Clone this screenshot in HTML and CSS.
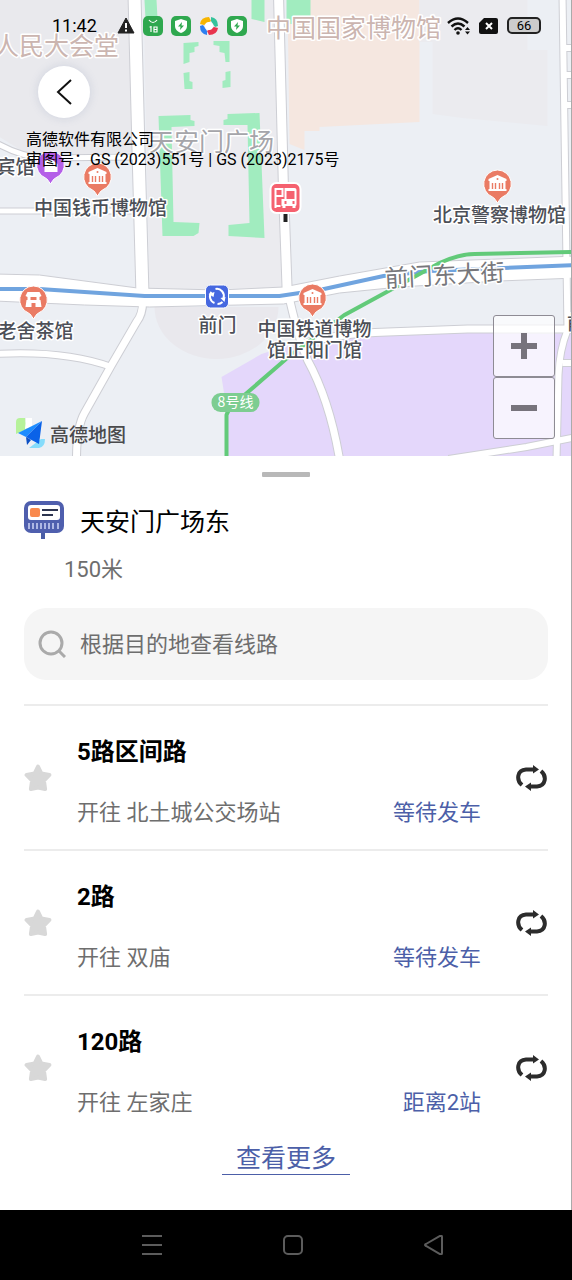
FILE: index.html
```html
<!DOCTYPE html>
<html lang="zh-CN">
<head>
  <meta charset="UTF-8" />
  <meta name="viewport" content="width=device-width, initial-scale=1" />
  <title>天安门广场东</title>
  <link rel="stylesheet" href="styles.css">
</head>
<body>
  <svg class="sprite" aria-hidden="true">
    <symbol id="pin" viewBox="0 0 30 36">
      <path d="M15 1a14 14 0 0 1 5 27c-2 1-3 3-5 6c-2-3-3-5-5-6a14 14 0 0 1 5-27z" stroke="#fff" stroke-width="1" />
    </symbol>
    <symbol id="museum" viewBox="0 0 30 36">
      <use href="#pin" fill="#ea7b64" />
      <path d="M15 6l9 4v2h-1v8h1v2H6v-2h1v-8H6v-2z" fill="#fff" />
      <path d="M10 14v6M13 14v6M17 14v6M20 14v6" stroke="#ea7b64" stroke-width="1.4" />
      <circle cx="15" cy="10" r="1" fill="#ea7b64" />
    </symbol>
    <symbol id="star" viewBox="0 0 28 28">
      <path d="M14 2.500l3.400 7 8 1.400-5.500 5.700 1.200 8.400-7.100-1.500-7.100 1.500 1.200-8.400-5.500-5.700 8-1.400z" fill="#d8d8d8" stroke="#d8d8d8" stroke-width="4" stroke-linejoin="round" />
    </symbol>
    <symbol id="swap" viewBox="0 0 32 26">
      <path d="M6 20C0 15 1 5 10 4.500h7M25 6C31 11 30 21 21 21.500h-7" fill="none" stroke="#2c2c2c" stroke-width="4" />
      <path d="M17 0l6 4.500-6 4zM15 26l-6-4.500 6-4z" fill="#2c2c2c" />
    </symbol>
    <symbol id="shield" viewBox="0 0 20 20">
      <rect width="20" height="20" rx="5" fill="#2fa84f" />
      <path d="M10 3l6 2v5c0 3.500-3 6-6 7-3-1-6-3.500-6-7V5z" fill="#fff" />
      <path d="M11 6l-4 4.500h2.500L9 14l4-4.500h-2.500z" fill="#2fa84f" />
    </symbol>
  </svg>

  <section class="map">
    <svg class="map-canvas" viewBox="0 0 572 456" preserveAspectRatio="xMidYMid slice">
      <rect width="572" height="456" fill="#eceff4" />
      <!-- zonas -->
      <path d="M0 0h129l5 152-68 3-40-2-26-16z" fill="#e9e9ed" />
      <path d="M144 0h130l8 288-132 1z" fill="#ebebef" />
      <path d="M288 0h132v122l-100 5v4h-15v19l-15-6z" fill="#f5e7e0" />
      <path d="M420 0h108v50h20v76l-85-8-30-4V42h-13z" fill="#ebebef" />
      <path d="M155 307a62 52 0 0 0 124 0z" fill="#e9e8ed" />
      <path d="M222 377l40-23 38-12 70-6 84-4 118 2v122H228V415z" fill="#e4d7fb" />
      <g fill="#a1ecbf">
        <path d="M145 0h12l1 18-12 1zM252 0h13v22l-13-3zM287 0h24v24h-24z" />
        <path d="M184 43l15-1v4l-4 1v5l-5 1v9l-6 2zM214 41h16v21h-4l-1-9-5-1v-6l-6-1zM184 73l6-1v9l3 1v7h-8zM231 71l-5 1v8l-3 1v7l8-1z" />
        <path d="M159 116l32-1v5l4 1v5l-23 1 2 95 26 1-1 10-5 3h-31zM228 114l32-1 5 125-36-2v-11l21-2-2-98h-24v-5l4-1z" />
      </g>
      <!-- calles: borde y relleno -->
      <g class="roads roads-edge">
        <path d="M135-5l4 155 4 145" stroke-width="14" />
        <path d="M279-5l5 195 4 110" stroke-width="11" />
        <path d="M143 300q1 13-6 22l-25 43-27 48q-8 14-8 46" stroke-width="9" />
        <path d="M-5 354q70-4 117 13" stroke-width="8" />
        <path d="M-5 142q26 15 50 16l92-1M-5 211h142" stroke-width="7" />
        <path d="M288 290q10 46 20 70 22 40 32 99" stroke-width="9" />
        <path d="M298 345q40-12 90-13l80-3h104" stroke-width="9" />
        <path d="M563-5l5 335q-8 20-9 45l-2 85M449 459l78-12 50-10M563 363h14M566 48h10M566 75h10M566 105h10" stroke-width="8" />
      </g>
      <path class="avenue" d="M-5 274l45 1 98 13 82 2 64-3 56-11 80-14 157-6v22l-77 3-100 6-60 6-56 11-134 3-65-2-90-4z" />
      <g class="roads roads-fill">
        <path d="M135-5l4 155 4 145" stroke-width="12" />
        <path d="M279-5l5 195 4 110" stroke-width="9" />
        <path d="M143 297q1 16-6 25l-25 43-27 48q-8 14-8 46" stroke-width="7" />
        <path d="M-5 354q70-4 117 13" stroke-width="6" />
        <path d="M-5 142q26 15 50 16l92-1M-5 211h142" stroke-width="5" />
        <path d="M288 290q10 46 20 70 22 40 32 99" stroke-width="7" />
        <path d="M298 345q40-12 90-13l80-3h104" stroke-width="7" />
        <path d="M563-5l5 335q-8 20-9 45l-2 85M449 459l78-12 50-10M563 363h14M566 48h10M566 75h10M566 105h10" stroke-width="6" />
      </g>
      <path class="metro" stroke="#70a4df" d="M-5 289h45l75 5 30 2h135l40-6 64-14 46-5 147-6" />
      <path class="metro" stroke="#62ca79" d="M227 459v-44q2-8 18-20l45-39 55-41 55-30 40-22q20-9 35-9l102-2" />
      <!-- parada -->
      <path d="M286 212v10" stroke="#222" stroke-width="4" />
      <rect x="271" y="183" width="30" height="30" rx="6" fill="#f5616f" stroke="#fff" stroke-width="2" />
      <path d="M276 188v20M276 189h7v7h-7M276 206h5" fill="none" stroke="#fff" stroke-width="2" />
      <path d="M285 188h10q2 0 2 2v14q0 2-1 2v2h-3v-2h-7v2h-3v-2h-1v-7h3zm2 3v8h8v-8zm-2 10v3h2v-3zm8 0v3h2v-3z" fill="#fff" fill-rule="evenodd" />
      <!-- metro -->
      <rect x="206" y="285" width="23" height="23" rx="5" fill="#4668e0" stroke="#fff" />
      <path d="M212 292a7 7 0 0 0 3 11M216 289a7 7 0 0 1 8 9M223 302a7 7 0 0 1-5 2" fill="none" stroke="#fff" stroke-width="2" />
      <path d="M209 294l6-2-1 5zM226 297l-5 1 4 4z" fill="#fff" />
      <rect x="212" y="393" width="48" height="19" rx="9" fill="#7dcd91" />
      <text class="line-name" x="236" y="407">8号线</text>

      <use href="#pin" x="36" y="150" width="30" height="36" fill="#b45fe8" />
      <path d="M45 160h8l5 4v8H45z" fill="#fff" />
      <use href="#museum" x="83" y="162" width="30" height="36" />
      <use href="#museum" x="483" y="169" width="30" height="36" />
      <use href="#museum" x="298" y="283" width="30" height="36" />
      <use href="#pin" x="19" y="285" width="30" height="36" fill="#ea7b64" />
      <path d="M28 292h12l2 4-2 1v3h1l1 7h-6v-4h-4v4h-6l1-7h1v-3l-2-1zm3 5v3h6v-3z" fill="#fff" fill-rule="evenodd" />

      <g class="area-name">
        <text x="57" y="55">人民大会堂</text>
        <text x="354" y="37">中国国家博物馆</text>
      </g>
      <text class="square-name" x="212" y="151">天安门广场</text>
      <text class="road-name" x="445" y="284" transform="rotate(-3 445 274)">前门东大街</text>
      <g class="poi-name">
        <text x="16" y="174">宾馆</text>
        <text x="101" y="215">中国钱币博物馆</text>
        <text x="500" y="222">北京警察博物馆</text>
        <text x="218" y="332">前门</text>
        <text x="36" y="338">老舍茶馆</text>
        <text x="315" y="336">中国铁道博物</text>
        <text x="315" y="357">馆正阳门馆</text>
        <text x="577" y="330">前</text>
      </g>
    </svg>

    <div class="map-top">
      <div class="status-bar">
        <span class="time">11:42</span>
        <div class="status-apps">
          <svg width="18" height="18" viewBox="0 0 18 18"><path d="M9 1l8 15H1z" fill="#222" stroke="#222" stroke-linejoin="round" /><path d="M9 6v5M9 12.500v2" stroke="#fff" stroke-width="2" /></svg>
          <svg width="20" height="20" viewBox="0 0 20 20"><rect width="20" height="20" rx="5" fill="#2fa84f" /><path d="M6 4q4 5 8 0M8 10v6M6.500 11H8M11 11h3v5h-3zM11 13.500h3" fill="none" stroke="#fff" stroke-width="1.200" /></svg>
          <svg width="20" height="20"><use href="#shield" /></svg>
          <svg width="20" height="20" viewBox="0 0 20 20">
            <path d="M1 8q1-7 9-7l2 4-7 4z" fill="#f7b500" />
            <path d="M12 1q7 1 7 9l-3 1-4-6z" fill="#35c39b" />
            <path d="M19 12q-1 7-9 7l-2-4 7-4z" fill="#e8344e" />
            <path d="M8 19q-7-1-7-9l3-1 4 6z" fill="#2d7ff0" />
            <circle cx="10" cy="10" r="4" fill="#fff" />
          </svg>
          <svg width="20" height="20"><use href="#shield" /></svg>
        </div>
        <div class="status-system">
          <svg width="24" height="18" viewBox="0 0 24 18"><path d="M1 6q10-9 20 0M4.500 9.500q6.500-6 13 0M7.500 13q3.500-3.500 7 0" fill="none" stroke="#111" stroke-width="2.400" /><circle cx="11" cy="16" r="1.800" fill="#111" /><path d="M18 13l2.500-3 2.500 3zM18 14.500l2.500 3 2.500-3z" fill="#111" /></svg>
          <svg width="20" height="16" viewBox="0 0 20 16"><path d="M5 0h12q2 0 2 2v12q0 2-2 2H2q-2 0-2-2V5z" fill="#111" /><path d="M7 5l6 6M13 5l-6 6" stroke="#fff" stroke-width="2" /></svg>
          <span class="battery">66</span>
        </div>
      </div>
      <button class="back" aria-label="返回">
        <svg width="18" height="28" viewBox="0 0 18 28"><path d="M16 2L3 14l13 12" fill="none" stroke="#111" stroke-width="2" /></svg>
      </button>
      <p class="copyright">高德软件有限公司<br>审图号：GS (2023)551号 | GS (2023)2175号</p>
    </div>

    <div class="zoom">
      <button aria-label="放大"><svg width="28" height="28" viewBox="0 0 28 28"><path d="M14 1v26M1 14h26" stroke="#77737c" stroke-width="6" /></svg></button>
      <button aria-label="缩小"><svg width="28" height="28" viewBox="0 0 28 28"><path d="M1 14h26" stroke="#77737c" stroke-width="6" /></svg></button>
    </div>

    <div class="map-logo">
      <svg width="30" height="32" viewBox="0 0 30 32">
        <path d="M0 5q0-4 4-4h5q0 8 6 9L0 17z" fill="#b6f29a" />
        <path d="M10 1h6v9l-7 2z" fill="#fff" />
        <path d="M13 31l12-9h4q0 8-6 9z" fill="#86dcfb" />
        <path d="M26 4L2 16l8 4z" fill="#1c8cff" />
        <path d="M26 4L10 20l13 7z" fill="#0a62e8" />
        <path d="M10 20l1 8 4-5z" fill="#0b4fc4" />
      </svg>
      <span>高德地图</span>
    </div>
  </section>

  <main class="sheet">
    <div class="handle"></div>
    <div class="station">
      <svg width="40" height="40" viewBox="0 0 40 40">
        <path d="M19 30v8" stroke="#4a5da6" stroke-width="4" />
        <rect width="40" height="32" rx="7" fill="#4f5fae" />
        <rect x="4" y="4" width="32" height="15" rx="3" fill="#fff" />
        <rect x="6" y="7" width="10" height="9" rx="2" fill="#f98a4e" />
        <path d="M18 9h16M18 14h11" stroke="#2d3550" stroke-width="2" />
        <path d="M5 22v6M9 22v6M13 22v6M17 22v6M21 22v6M25 22v6M29 22v6M34 22v6" stroke="#aeb7e4" stroke-width="2" />
      </svg>
      <h1>天安门广场东</h1>
    </div>
    <p class="distance">150米</p>

    <label class="search">
      <svg width="28" height="28" viewBox="0 0 28 28" fill="none" stroke="#aaa" stroke-width="3"><circle cx="13" cy="13" r="11" /><path d="M21 21l6 6" /></svg>
      <input type="text" placeholder="根据目的地查看线路" aria-label="根据目的地查看线路" />
    </label>

    <ul class="lines">
      <li>
        <button class="icon-btn" aria-label="收藏"><svg width="28" height="28"><use href="#star" /></svg></button>
        <div class="line-info">
          <h2>5路区间路</h2>
          <p><span>开往 北土城公交场站</span><span class="state">等待发车</span></p>
        </div>
        <button class="icon-btn" aria-label="换向"><svg width="32" height="26"><use href="#swap" /></svg></button>
      </li>
      <li>
        <button class="icon-btn" aria-label="收藏"><svg width="28" height="28"><use href="#star" /></svg></button>
        <div class="line-info">
          <h2>2路</h2>
          <p><span>开往 双庙</span><span class="state">等待发车</span></p>
        </div>
        <button class="icon-btn" aria-label="换向"><svg width="32" height="26"><use href="#swap" /></svg></button>
      </li>
      <li>
        <button class="icon-btn" aria-label="收藏"><svg width="28" height="28"><use href="#star" /></svg></button>
        <div class="line-info">
          <h2>120路</h2>
          <p><span>开往 左家庄</span><span class="state">距离2站</span></p>
        </div>
        <button class="icon-btn" aria-label="换向"><svg width="32" height="26"><use href="#swap" /></svg></button>
      </li>
    </ul>
    <a class="more" href="#">查看更多</a>
  </main>

  <nav class="system-nav">
    <button aria-label="最近任务"><svg width="20" height="20" viewBox="0 0 20 20"><path d="M0 1h20M0 10h20M0 19h20" /></svg></button>
    <button aria-label="主屏幕"><svg width="20" height="20" viewBox="0 0 20 20"><rect x="1" y="1" width="18" height="18" rx="4" /></svg></button>
    <button aria-label="返回"><svg width="20" height="20" viewBox="0 0 20 20"><path d="M2 9L16 1q2-1 2 1v16q0 2-2 1L2 11q-2-1 0-2z" /></svg></button>
  </nav>
</body>
</html>
```

FILE: styles.css
```css
* {
  box-sizing: border-box;
}
body {
  margin: 0;
  min-height: 100vh;
  display: flex;
  flex-direction: column;
  background: #fff;
  color: #000;
  font-family: Roboto, "Noto Sans CJK SC", sans-serif;
}
h1, h2, p, ul {
  margin: 0;
  padding: 0;
}
button {
  padding: 0;
  border: none;
  background: none;
  cursor: pointer;
}
svg {
  display: block;
  flex-shrink: 0;
}
.sprite {
  position: absolute;
  width: 0;
  height: 0;
}

/* mapa */
.map {
  position: relative;
  height: 456px;
  overflow: hidden;
  border-right: 1px solid #aaa;
}
.map-canvas {
  width: 100%;
  height: 100%;
}
.map-canvas text {
  font-family: "Noto Sans CJK SC", sans-serif;
  text-anchor: middle;
  paint-order: stroke;
  stroke: #fff;
  stroke-width: 3px;
  stroke-linejoin: round;
}
.roads {
  fill: none;
}
.roads-edge {
  stroke: #cdced4;
}
.roads-fill {
  stroke: #fff;
}
.avenue {
  fill: #fff;
  stroke: #cdced4;
}
.metro {
  fill: none;
  stroke-width: 4px;
}
.area-name {
  font-size: 25px;
  fill: #cbb5b0;
}
.square-name {
  font-size: 25px;
  fill: #a5a5aa;
}
.road-name {
  font-size: 24px;
  fill: #77777b;
}
.poi-name {
  font-size: 19px;
  font-weight: 500;
  fill: #4c4f57;
}
.map-canvas .line-name {
  font-size: 14px;
  fill: #fff;
  stroke: none;
}
.map-top {
  position: absolute;
  top: 0;
  left: 0;
  right: 0;
}
.status-bar {
  display: flex;
  align-items: center;
  height: 51px;
  padding: 0 30px 0 52px;
}
.time {
  font-size: 18px;
  margin-right: 20px;
}
.status-apps, .status-system {
  display: flex;
  align-items: center;
  gap: 8px;
}
.status-system {
  margin-left: auto;
}
.battery {
  width: 34px;
  height: 17px;
  border: 2px solid #222;
  border-radius: 5px;
  background: #ccc;
  font-size: 13px;
  line-height: 14px;
  text-align: center;
}
.back {
  display: flex;
  align-items: center;
  justify-content: center;
  width: 52px;
  height: 52px;
  margin: 15px 0 12px 38px;
  border-radius: 50%;
  background: #fff;
  box-shadow: 0 0 10px rgba(100, 120, 160, 0.2);
}
.copyright {
  padding-left: 26px;
  font-size: 16px;
  line-height: 20px;
}
.zoom {
  position: absolute;
  right: 16px;
  bottom: 17px;
  width: 62px;
}
.zoom button {
  display: flex;
  align-items: center;
  justify-content: center;
  width: 100%;
  height: 62px;
  border: 1px solid #8e8b94;
  border-radius: 3px;
  background: rgba(255, 255, 255, 0.7);
}
.map-logo {
  position: absolute;
  left: 16px;
  bottom: 7px;
  display: flex;
  align-items: center;
  gap: 4px;
  font-size: 19px;
  font-weight: 500;
  color: #4a4a4c;
}

/* panel inferior */
.sheet {
  flex: 1;
  padding: 16px 23px 24px 24px;
  border-right: 1px solid #aaa;
}
.handle {
  width: 48px;
  height: 5px;
  margin: 0 auto 24px;
  background: #b8b8b8;
  border-radius: 1px;
}
.station {
  display: flex;
  align-items: flex-start;
  gap: 16px;
}
.station h1 {
  font-size: 25px;
  font-weight: 400;
  line-height: 44px;
}
.distance {
  margin: 11px 0 24px 40px;
  font-size: 22px;
  line-height: 28px;
  color: #6e6e6e;
}
.search {
  display: flex;
  align-items: center;
  gap: 14px;
  height: 72px;
  padding: 0 14px;
  border-radius: 22px;
  background: #f5f5f5;
}
.search input {
  flex: 1;
  min-width: 0;
  padding: 0;
  border: none;
  outline: none;
  background: none;
  font-family: inherit;
  font-size: 22px;
}
.search input::placeholder {
  color: #6e6e6e;
}
.lines {
  margin-top: 24px;
  list-style: none;
}
.lines li {
  display: flex;
  align-items: center;
  border-top: 2px solid #ececec;
}
.line-info {
  flex: 1;
  margin: 0 35px 0 25px;
  padding: 30px 0 20px;
}
.line-info h2 {
  margin-bottom: 29px;
  font-size: 24px;
  font-weight: 700;
  line-height: 32px;
}
.line-info p {
  display: flex;
  justify-content: space-between;
  font-size: 22px;
  line-height: 32px;
  color: #6e6e6e;
}
.line-info .state {
  color: #4c5fa8;
}
.more {
  display: block;
  width: 128px;
  margin: 5px auto 0;
  border-bottom: 1px solid #4c5fa8;
  font-size: 25px;
  line-height: 30px;
  text-align: center;
  text-decoration: none;
  color: #4c5fa8;
}

.system-nav {
  display: flex;
  justify-content: space-between;
  align-items: center;
  height: 70px;
  padding: 0 128px 0 142px;
  background: #000;
}
.system-nav svg {
  fill: none;
  stroke: #5c5c5c;
  stroke-width: 2px;
}
```
